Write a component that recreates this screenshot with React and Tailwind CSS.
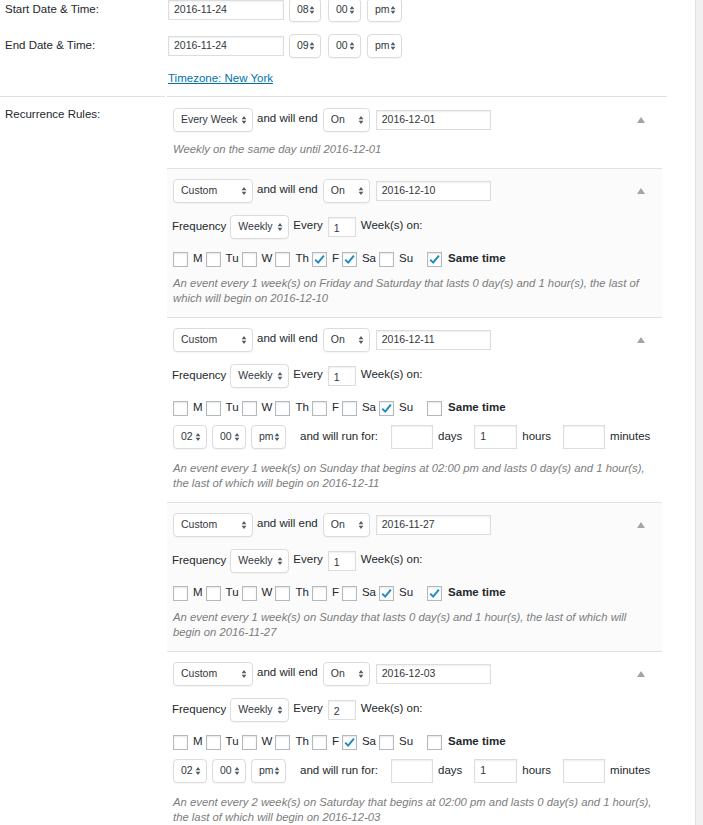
import React from "react";

// up/down arrows drawn at the right edge of every select box
function Arrows() {
  return (
    <svg width="6" height="10" viewBox="0 0 6 10" className="shrink-0">
      <path d="M3 1 L5.4 4.2 H0.6Z M3 9 L0.6 5.8 H5.4Z" fill="#555d66" />
    </svg>
  );
}

function Select({ value, className = "" }) {
  return (
    <div
      className={`flex h-[24px] shrink-0 items-center justify-between rounded-[4px] border border-[#dcdcdc] bg-white pl-[7px] pr-[5px] text-[10.5px] text-[#32373c] shadow-[0_1px_1px_rgba(0,0,0,0.04)] ${className}`}
    >
      <span>{value}</span>
      <Arrows />
    </div>
  );
}

function Field({ value = "", className = "" }) {
  return (
    <div
      className={`flex shrink-0 items-center border border-[#dddddd] bg-white pl-[5px] text-[10.5px] text-[#32373c] shadow-[inset_0_1px_2px_rgba(0,0,0,0.07)] ${className}`}
    >
      {value}
    </div>
  );
}

function Check({ checked }) {
  return (
    <span className="flex h-[15px] w-[15px] shrink-0 items-center justify-center border border-[#b4b9be] bg-white shadow-[inset_0_1px_2px_rgba(0,0,0,0.1)]">
      {checked && (
        <svg width="13" height="13" viewBox="0 0 13 13">
          <path d="M2.2 6.6 L5.2 9.6 L10.9 2.6" fill="none" stroke="#1e8cbe" strokeWidth="2" />
        </svg>
      )}
    </span>
  );
}

const DAYS = ["M", "Tu", "W", "Th", "F", "Sa", "Su"];

function DayRow({ days, same }) {
  return (
    <div className="mt-[12px] flex h-[16px] items-center whitespace-nowrap">
      {DAYS.map((d) => (
        <React.Fragment key={d}>
          <Check checked={days.includes(d)} />
          <span className="ml-[5px] mr-[3px]">{d}</span>
        </React.Fragment>
      ))}
      <span className="ml-[11px] flex items-center">
        <Check checked={same} />
        <span className="ml-[6px] font-bold">Same time</span>
      </span>
    </div>
  );
}

function TimeRow() {
  return (
    <div className="mt-[9px] flex h-[24px] items-center whitespace-nowrap">
      <Select value="02" className="w-[34px]" />
      <Select value="00" className="ml-[5px] w-[34px]" />
      <Select value="pm" className="ml-[5px] w-[35px]" />
      <span className="ml-[14px] shrink-0">and will run for:</span>
      <Field className="ml-[13px] h-[24px] w-[42px]" />
      <span className="ml-[5px] shrink-0">days</span>
      <Field value="1" className="ml-[12px] h-[24px] w-[43px]" />
      <span className="ml-[5px] shrink-0">hours</span>
      <Field className="ml-[12px] h-[24px] w-[42px]" />
      <span className="ml-[5px] shrink-0">minutes</span>
    </div>
  );
}

const rules = [
  {
    kind: "Every Week",
    end: "2016-12-01",
    desc: ["Weekly on the same day until 2016-12-01"],
  },
  {
    kind: "Custom",
    end: "2016-12-10",
    every: "1",
    days: ["F", "Sa"],
    same: true,
    shade: true,
    desc: [
      "An event every 1 week(s) on Friday and Saturday that lasts 0 day(s) and 1 hour(s), the last of",
      "which will begin on 2016-12-10",
    ],
  },
  {
    kind: "Custom",
    end: "2016-12-11",
    every: "1",
    days: ["Su"],
    same: false,
    desc: [
      "An event every 1 week(s) on Sunday that begins at 02:00 pm and lasts 0 day(s) and 1 hour(s),",
      "the last of which will begin on 2016-12-11",
    ],
  },
  {
    kind: "Custom",
    end: "2016-11-27",
    every: "1",
    days: ["Su"],
    same: true,
    shade: true,
    desc: [
      "An event every 1 week(s) on Sunday that lasts 0 day(s) and 1 hour(s), the last of which will",
      "begin on 2016-11-27",
    ],
  },
  {
    kind: "Custom",
    end: "2016-12-03",
    every: "2",
    days: ["Sa"],
    same: false,
    desc: [
      "An event every 2 week(s) on Saturday that begins at 02:00 pm and lasts 0 day(s) and 1 hour(s),",
      "the last of which will begin on 2016-12-03",
    ],
  },
];

function Rule({ rule, first }) {
  const custom = rule.kind === "Custom";
  return (
    <div
      className={`w-[495px] border-b border-[#e1e1e1] pl-[6px] pr-[17px] pb-[11px] ${first ? "pt-[11px]" : "pt-[10px]"} ${rule.shade ? "bg-[#fbfbfb]" : "bg-white"}`}
    >
      <div className="flex h-[24px] items-center">
        <Select value={rule.kind} className="w-[80px]" />
        <span className="ml-[4px] -mt-[3px]">and will end</span>
        <Select value="On" className="ml-[5px] w-[47px]" />
        <Field value={rule.end} className="ml-[6px] h-[20px] w-[115px]" />
        <svg width="8" height="6" viewBox="0 0 8 6" className="ml-auto">
          <path d="M4 0 L8 6 H0Z" fill="#a0a5aa" />
        </svg>
      </div>
      {custom && (
        <>
          <div className="mt-[12px] flex h-[24px] items-center">
            <span className="-ml-[1px]">Frequency</span>
            <Select value="Weekly" className="ml-[4px] w-[59px]" />
            <span className="ml-[4px] -mt-[3px]">Every</span>
            <Field value={rule.every} className="ml-[5px] h-[20px] w-[28px] pt-[3px]" />
            <span className="ml-[5px] -mt-[3px]">Week(s) on:</span>
          </div>
          <DayRow days={rule.days} same={rule.same} />
          {!rule.same && <TimeRow />}
        </>
      )}
      <div
        className={`text-[11.3px] italic leading-[15px] text-[#7c7c7c] ${
          !custom ? "mt-[10px]" : rule.same ? "mt-[9px]" : "mt-[12px]"
        }`}
      >
        {rule.desc.map((line) => (
          <div key={line} className="whitespace-nowrap">
            {line}
          </div>
        ))}
      </div>
    </div>
  );
}

function DateRow({ label, date, hour }) {
  return (
    <div className="flex h-[24px] items-center">
      <div className="w-[168px] pl-[5px]">{label}</div>
      <Field value={date} className="h-[20px] w-[116px]" />
      <Select value={hour} className="ml-[5px] w-[32px]" />
      <Select value="00" className="ml-[7px] w-[33px]" />
      <Select value="pm" className="ml-[6px] w-[35px]" />
    </div>
  );
}

export default function App() {
  return (
    <div className="flex h-[825px] w-[703px] overflow-hidden bg-white font-['Liberation_Sans',Arial,sans-serif] text-[11.5px] text-[#23282d]">
      <div className="w-[695px]">
        <div className="-mt-[2px]">
          <DateRow label="Start Date & Time:" date="2016-11-24" hour="08" />
          <div className="mt-[12px]">
            <DateRow label="End Date & Time:" date="2016-11-24" hour="09" />
          </div>
          <div className="ml-[168px] mt-[13px] leading-[14px]">
            <span className="text-[#0073aa] underline">Timezone: New York</span>
          </div>
        </div>

        <div className="mt-[11px] flex">
          <div className="mr-[2px] w-[165px] border-t border-[#e1e1e1] pl-[5px] pt-[10px] leading-[14px]">
            Recurrence Rules:
          </div>
          <div className="w-[500px] border-t border-[#e1e1e1]">
            {rules.map((r, i) => (
              <Rule key={i} rule={r} first={i === 0} />
            ))}
          </div>
        </div>
      </div>
      <div className="w-[8px] border-l border-[#e2e2e2] bg-[#f1f1f1]" />
    </div>
  );
}
